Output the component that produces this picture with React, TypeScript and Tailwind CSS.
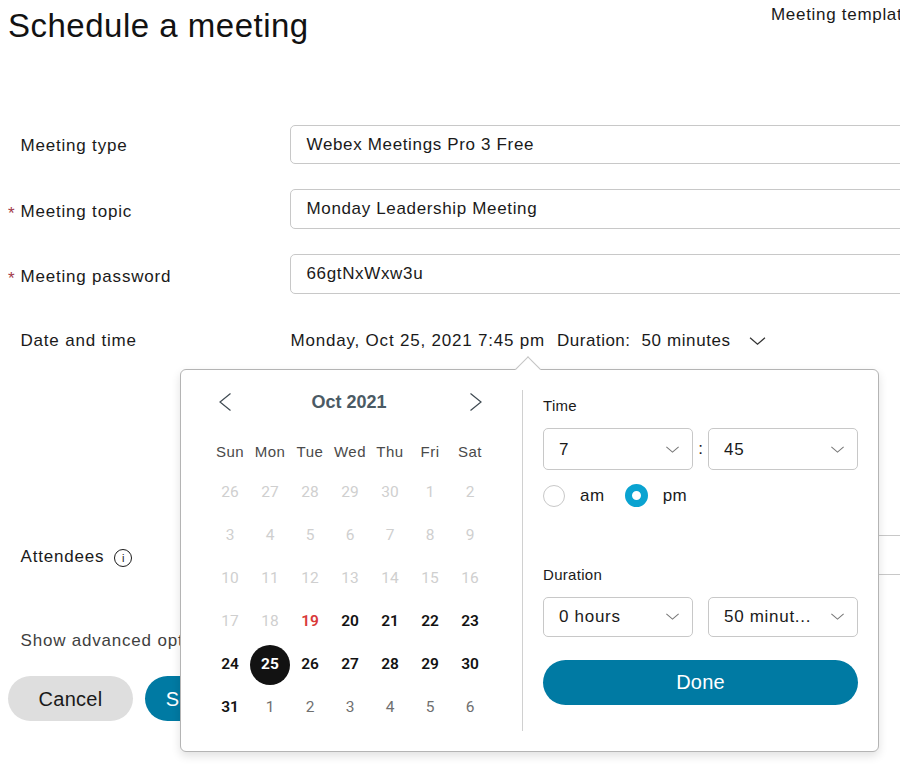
const WEEKDAYS = ["Sun", "Mon", "Tue", "Wed", "Thu", "Fri", "Sat"]

type Tone = "off" | "red" | "on" | "selected" | "next"

const DAYS: [string, Tone][] = [
  ...["26", "27", "28", "29", "30", "1", "2", "3", "4", "5", "6", "7", "8", "9", "10", "11", "12", "13", "14", "15", "16", "17", "18"].map(
    (d): [string, Tone] => [d, "off"],
  ),
  ["19", "red"],
  ...["20", "21", "22", "23", "24"].map((d): [string, Tone] => [d, "on"]),
  ["25", "selected"],
  ...["26", "27", "28", "29", "30", "31"].map((d): [string, Tone] => [d, "on"]),
  ...["1", "2", "3", "4", "5", "6"].map((d): [string, Tone] => [d, "next"]),
]

const TONE_CLASS: Record<Tone, string> = {
  off: "text-[#cfcfcf]",
  red: "text-[#d93a3a] font-semibold",
  on: "text-[#121212] font-semibold",
  selected: "text-white font-bold bg-[#121212] rounded-full",
  next: "text-[#6f6f6f]",
}

function Chevron({ className }: { className: string }) {
  return (
    <svg viewBox="0 0 16 8" fill="none" stroke="currentColor" strokeWidth="1.2" className={className}>
      <path d="M1 1l7 6 7-6" />
    </svg>
  )
}

function Field({ label, value, required, first }: { label: string; value: string; required?: boolean; first?: boolean }) {
  return (
    <div className={`flex ${first ? "h-[39px]" : "h-10"} w-[1000px] text-[17px] text-[#1a1a1a]`}>
      <div className={`relative flex w-[290px] items-center pl-[20.5px] tracking-[0.8px] ${first ? "pt-[3px]" : "pt-[5px]"}`}>
        {required && <span className="absolute left-[8px] top-[12px] text-[#a33a4a]">*</span>}
        {label}
      </div>
      <div className="flex flex-1 items-center rounded-[5px] border border-[#c8c8c8] pl-[15.5px] tracking-[0.65px]">{value}</div>
    </div>
  )
}

function Select({ value, className = "" }: { value: string; className?: string }) {
  return (
    <div className={`flex h-full w-[150px] items-center justify-between rounded-[5px] border border-[#c8c8c8] pl-[15px] pr-[12px] text-[17px] tracking-[0.7px] text-[#1a1a1a] ${className}`}>
      <span>{value}</span>
      <Chevron className="h-[7px] w-[15px] text-[#777777]" />
    </div>
  )
}

function Calendar() {
  return (
    <div className="w-[341px] pl-[29px] pt-[19px]">
      <div className="flex h-[26px] w-[280px] items-center justify-between pl-[9px] pr-[8px]">
        <svg viewBox="0 0 12 18" fill="none" stroke="currentColor" strokeWidth="1.2" className="h-[18px] w-[12px] text-[#3f4a52]">
          <path d="M11.5 .5L1 9l10.5 8.5" />
        </svg>
        <span className="-ml-[3px] text-[18px] font-bold text-[#4b5a64]">Oct 2021</span>
        <svg viewBox="0 0 12 18" fill="none" stroke="currentColor" strokeWidth="1.2" className="h-[18px] w-[12px] text-[#3f4a52]">
          <path d="M.5 .5L11 9 .5 17.5" />
        </svg>
      </div>
      <div className="mt-[25px] grid w-[280px] grid-cols-7 text-[15px] tracking-[0.5px] text-[#4a4a4a]">
        {WEEKDAYS.map((w) => (
          <div key={w} className="flex h-[24px] items-center justify-center">
            {w}
          </div>
        ))}
      </div>
      <div className="mt-[9px] grid w-[280px] grid-cols-7 gap-y-[3px] font-['Roboto',sans-serif] text-[15.5px]">
        {DAYS.map(([d, tone], i) => (
          <div key={i} className="flex h-[40px] items-center justify-center">
            <span className={`flex size-[40px] items-center justify-center ${TONE_CLASS[tone]}`}>{d}</span>
          </div>
        ))}
      </div>
    </div>
  )
}

function TimePanel() {
  return (
    <div className="my-[20px] flex h-[341px] w-[356px] flex-col border-l border-[#d0d0d0] pl-[20px] text-[#1a1a1a]">
      <div className="mt-[6px] text-[15px] leading-5 tracking-[0.3px]">Time</div>
      <div className="mt-[12px] flex h-[42px] items-center">
        <Select value="7" className="pt-[1px]" />
        <span className="w-[15px] text-center text-[17px]">:</span>
        <Select value="45" className="pt-[1px]" />
      </div>
      <div className="mt-[13px] flex items-center text-[17px] tracking-[0.5px]">
        <span className="size-[22px] rounded-full border border-[#c8c8c8]" />
        <span className="ml-[15px]">am</span>
        <span className="ml-[20px] size-[23px] rounded-full border-[7px] border-[#0aa3d1] bg-white" />
        <span className="ml-[15px]">pm</span>
      </div>
      <div className="mt-[56px] text-[15px] leading-5 tracking-[0.3px]">Duration</div>
      <div className="mt-[12px] flex h-[40px] items-center">
        <Select value="0 hours" />
        <span className="w-[15px]" />
        <Select value="50 minut..." />
      </div>
      <button className="mt-[23px] h-[45px] w-[315px] rounded-full bg-[#007aa3] text-[20px] tracking-[0.2px] text-white">Done</button>
    </div>
  )
}

export default function App() {
  return (
    <div className="relative h-[764px] w-[900px] overflow-hidden bg-white font-['Liberation_Sans',Arial,sans-serif]">
      <div className="flex h-[125px] w-[1000px] justify-between">
        <h1 className="pl-[8px] pt-[6px] text-[33px] leading-10 tracking-[0.5px] text-[#121212]">Schedule a meeting</h1>
        <div className="w-[229px] whitespace-nowrap pt-[5px] text-[17px] leading-5 tracking-[0.7px] text-[#1a1a1a]">Meeting templates</div>
      </div>

      <div className="flex flex-col gap-[25px]">
        <Field label="Meeting type" value="Webex Meetings Pro 3 Free" first />
        <Field label="Meeting topic" value="Monday Leadership Meeting" required />
        <Field label="Meeting password" value="66gtNxWxw3u" required />
      </div>

      <div className="mt-[36px] flex h-[22px] w-[1000px] items-center text-[17px] tracking-[0.8px] text-[#1a1a1a]">
        <div className="w-[290.5px] pl-[20.5px]">Date and time</div>
        <span>Monday, Oct 25, 2021 7:45 pm</span>
        <span className="ml-[12px] tracking-[0.5px]">Duration:</span>
        <span className="ml-[11px] tracking-[0.6px]">50 minutes</span>
        <Chevron className="ml-[18px] h-[10px] w-[17px] text-[#333333]" />
      </div>

      <div className="mt-[183px] flex h-[40px] w-[1000px] text-[17px] tracking-[0.8px] text-[#1a1a1a]">
        <div className="flex w-[290px] items-start gap-[10px] pl-[20.5px] pt-[12px] leading-5">
          Attendees
          <span className="mt-[2px] flex size-[18px] items-center justify-center rounded-full border border-[#1a1a1a] text-[11px] leading-none tracking-normal">i</span>
        </div>
        <div className="flex-1 rounded-[5px] border border-[#c8c8c8]" />
      </div>

      <div className="mt-[56px] pl-[20.5px] text-[17px] leading-5 tracking-[0.8px] text-[#3f3f3f]">Show advanced options</div>

      <div className="mt-[25px] flex gap-[12px] pl-[8px]">
        <button className="h-[45px] w-[125px] rounded-full bg-[#dedede] text-[20px] tracking-[0.3px] text-[#1a1a1a]">Cancel</button>
        <button className="h-[45px] w-[125px] rounded-full bg-[#007aa3] text-[20px] text-white">Schedule</button>
      </div>

      <div className="absolute left-[180px] top-[369px] flex h-[383px] w-[699px] rounded-[6px] border border-[#b4b4b4] bg-white shadow-[0_4px_10px_rgba(0,0,0,0.12)]">
        <div className="absolute -top-[10px] left-[338px] size-[18px] rotate-45 border-l border-t border-[#c4c4c4] bg-white" />
        <Calendar />
        <TimePanel />
      </div>
    </div>
  )
}
